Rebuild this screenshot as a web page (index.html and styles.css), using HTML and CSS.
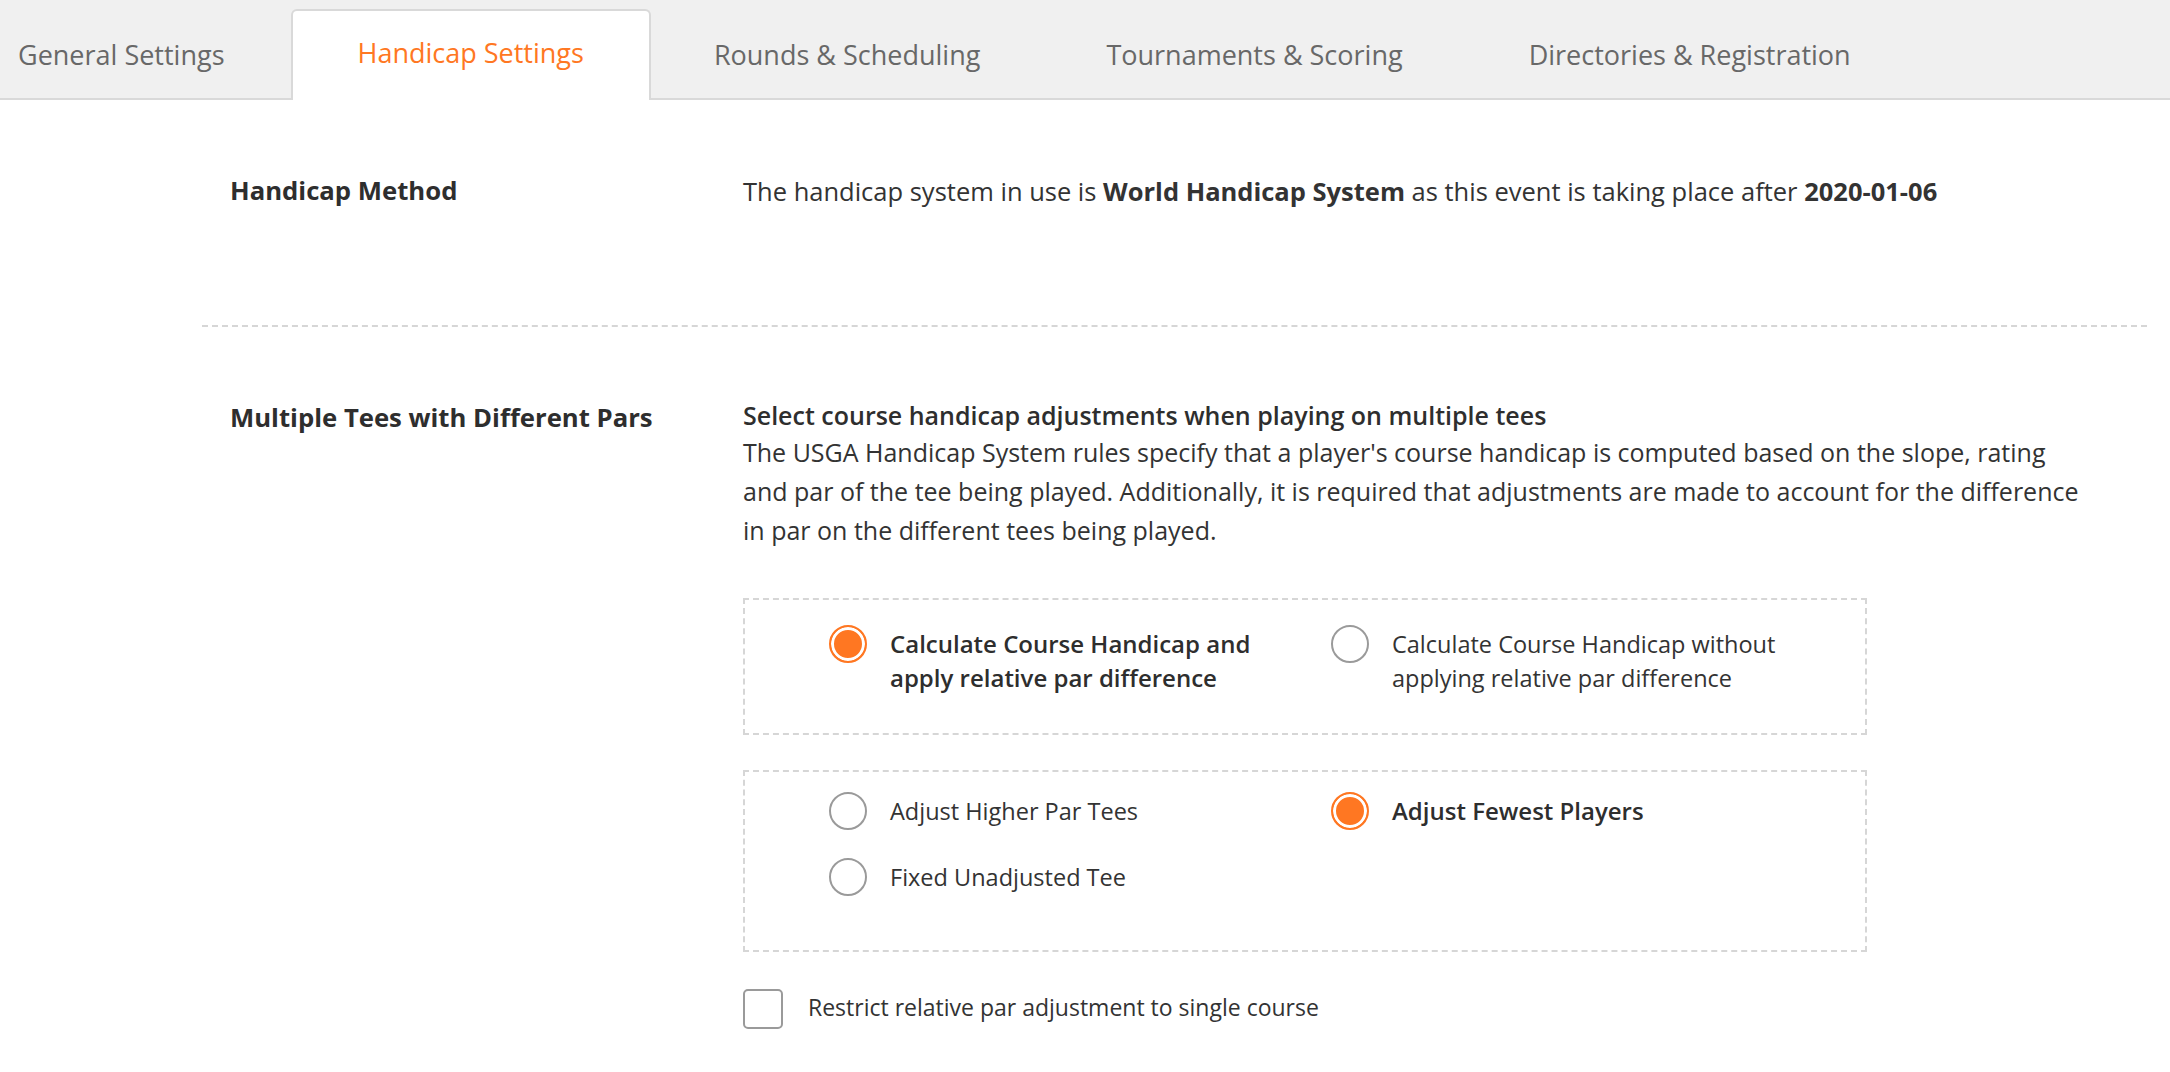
FILE: index.html
```html
<!DOCTYPE html>
<html lang="en">
<head>
  <meta charset="UTF-8">
  <title>Event Settings - Handicap</title>
  <link rel="stylesheet" href="styles.css">
</head>
<body>
  <nav class="tabs">
    <a class="tab tab-first" href="#">General Settings</a>
    <a class="tab active" href="#">Handicap Settings</a>
    <a class="tab" href="#">Rounds &amp; Scheduling</a>
    <a class="tab" href="#">Tournaments &amp; Scoring</a>
    <a class="tab" href="#">Directories &amp; Registration</a>
  </nav>

  <div class="settings">
    <section class="row row-method">
      <h3 class="row-label">Handicap Method</h3>
      <div class="row-body">
        <p>The handicap system in use is <strong>World Handicap System</strong> as this event is taking place after <strong>2020-01-06</strong></p>
      </div>
    </section>

    <section class="row">
      <h3 class="row-label">Multiple Tees with Different Pars</h3>
      <div class="row-body">
        <p class="lead">Select course handicap adjustments when playing on multiple tees</p>
        <p class="desc">The USGA Handicap System rules specify that a player's course handicap is computed based on the slope, rating<br>
          and par of the tee being played. Additionally, it is required that adjustments are made to account for the difference in par on the different tees being played.</p>

        <div class="option-box box-calc">
          <label class="option">
            <input type="radio" name="calc" checked>
            <span>Calculate Course Handicap and apply relative par difference</span>
          </label>
          <label class="option">
            <input type="radio" name="calc">
            <span>Calculate Course Handicap without applying relative par difference</span>
          </label>
        </div>

        <div class="option-box box-adjust">
          <label class="option">
            <input type="radio" name="adjust">
            <span>Adjust Higher Par Tees</span>
          </label>
          <label class="option">
            <input type="radio" name="adjust" checked>
            <span>Adjust Fewest Players</span>
          </label>
          <label class="option">
            <input type="radio" name="adjust">
            <span>Fixed Unadjusted Tee</span>
          </label>
        </div>

        <label class="check">
          <input type="checkbox">
          <span>Restrict relative par adjustment to single course</span>
        </label>
      </div>
    </section>
  </div>
</body>
</html>
```

FILE: styles.css
```css
body {
  margin: 0;
  font-family: "Open Sans", Lato, Arial, sans-serif;
  color: #333;
  background: #fff;
}

/* tab strip */
.tabs {
  display: flex;
  align-items: flex-end;
  height: 100px;
  background: #f0f0f0;
  border-bottom: 2px solid #d9d9d9;
  box-sizing: border-box;
}
.tab {
  display: flex;
  align-items: center;
  height: 88px;
  padding: 0 61px 6px;
  box-sizing: border-box;
  margin-bottom: -2px;
  font-size: 27px;
  color: #686868;
  text-decoration: none;
  border: 2px solid transparent;
  border-bottom: none;
}
.tab-first {
  padding-left: 16px;
  padding-right: 64px;
}
.tab.active {
  height: 91px;
  padding: 0 65px 6px;
  color: #ff7722;
  background: #fff;
  border-color: #d9d9d9;
  border-radius: 6px 6px 0 0;
}

/* settings rows */
.settings {
  margin-left: 202px;
  margin-right: 23px;
}
.row {
  display: flex;
  padding: 72px 0 60px 28px;
}
.row-method {
  padding-bottom: 114px;
  border-bottom: 2px dashed #d6d6d6;
}
.row-label {
  width: 513px;
  flex-shrink: 0;
  margin: 0;
  font-size: 25.7px;
  line-height: 38px;
  font-weight: 700;
  color: #2e2e2e;
}
.row-body {
  flex: 1;
  font-size: 25.5px;
  line-height: 39px;
}
.row-body p {
  margin: 0;
}
.row-body .lead {
  margin-top: -2px;
  font-size: 25px;
  line-height: 36px;
  font-weight: 600;
  color: #2e2e2e;
}
.desc {
  max-width: 1345px;
  font-size: 25px;
}

/* radio groups */
.option-box {
  display: grid;
  grid-template-columns: 502px 502px;
  row-gap: 30px;
  width: 1124px;
  box-sizing: border-box;
  border: 2px dashed #d6d6d6;
  padding: 27px 0 38px 84px;
  margin-top: 48px;
  font-size: 23.5px;
}
.box-adjust {
  margin-top: 35px;
  padding: 22px 0 54px 84px;
}
.option {
  display: flex;
  align-items: flex-start;
  gap: 23px;
  line-height: 34px;
}
.option span {
  max-width: 400px;
}
.option input:checked + span {
  font-weight: 600;
  font-size: 24px;
  color: #2e2e2e;
}

input[type="radio"] {
  appearance: none;
  flex-shrink: 0;
  width: 38px;
  height: 38px;
  margin: -2px 0 0;
  border: 2px solid #9a9a9a;
  border-radius: 50%;
  background: #fff;
}
input[type="radio"]:checked {
  border-color: #ff7722;
  background: #ff7722;
  box-shadow: inset 0 0 0 3px #fff;
}

.check {
  display: flex;
  align-items: center;
  gap: 25px;
  margin-top: 37px;
  font-size: 23px;
  line-height: 34px;
}
.check span {
  margin-top: -4px;
}
input[type="checkbox"] {
  appearance: none;
  width: 40px;
  height: 40px;
  margin: 0;
  border: 2px solid #9a9a9a;
  border-radius: 5px;
  background: #fff;
}
```
